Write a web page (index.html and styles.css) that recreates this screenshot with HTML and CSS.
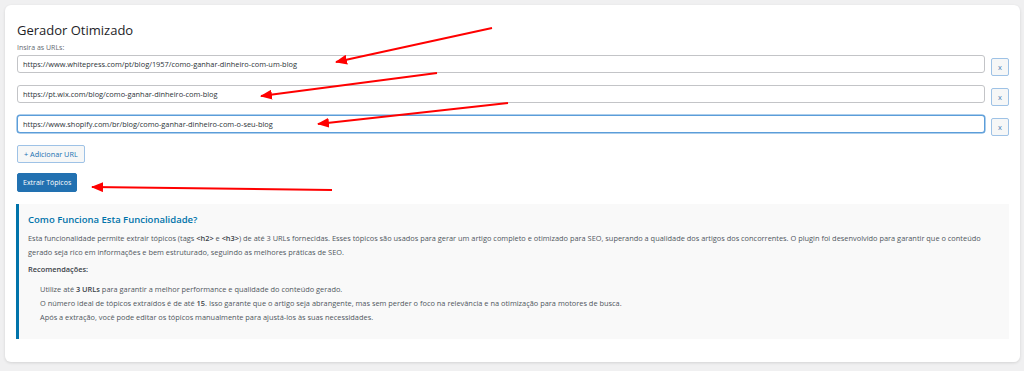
FILE: index.html
```html
<!DOCTYPE html>
<html>
<head>
  <meta charset="utf-8" />
  <title>Gerador Otimizado</title>
<link rel="stylesheet" href="styles.css">
</head>
<body>
<div class="wrap">
  <div class="card">
    <h2 class="title">Gerador Otimizado</h2>
    <label class="field_label">Insira as URLs:</label>
    <div class="url_list">
      <div class="url_row">
        <input class="url_input" type="text" value="https://www.whitepress.com/pt/blog/1957/como-ganhar-dinheiro-com-um-blog">
        <button class="btn_remove">x</button>
      </div>
      <div class="url_row">
        <input class="url_input" type="text" value="https://pt.wix.com/blog/como-ganhar-dinheiro-com-blog">
        <button class="btn_remove">x</button>
      </div>
      <div class="url_row">
        <input class="url_input focused" type="text" value="https://www.shopify.com/br/blog/como-ganhar-dinheiro-com-o-seu-blog">
        <button class="btn_remove">x</button>
      </div>
    </div>
    <button class="btn_add">+ Adicionar URL</button>
    <button class="btn_primary">Extrair Tópicos</button>
    <div class="info_box">
      <h3>Como Funciona Esta Funcionalidade?</h3>
      <p>Esta funcionalidade permite extrair tópicos (tags <strong>&lt;h2&gt;</strong> e <strong>&lt;h3&gt;</strong>) de até 3 URLs fornecidas. Esses tópicos são usados para gerar um artigo completo e otimizado para SEO, superando a qualidade dos artigos dos concorrentes. O plugin foi desenvolvido para garantir que o conteúdo gerado seja rico em informações e bem estruturado, seguindo as melhores práticas de SEO.</p>
      <p class="rec"><strong>Recomendações:</strong></p>
      <ul>
        <li>Utilize até <strong>3 URLs</strong> para garantir a melhor performance e qualidade do conteúdo gerado.</li>
        <li>O número ideal de tópicos extraídos é de até <strong>15</strong>. Isso garante que o artigo seja abrangente, mas sem perder o foco na relevância e na otimização para motores de busca.</li>
        <li>Após a extração, você pode editar os tópicos manualmente para ajustá-los às suas necessidades.</li>
      </ul>
    </div>
  </div>
  <!-- annotation arrows drawn over the screenshot -->
  <svg class="arrows" width="1024" height="371" viewBox="0 0 1024 371">
    <defs>
      <marker id="head" markerWidth="6" markerHeight="5" refX="5.5" refY="2.5" orient="auto" markerUnits="strokeWidth">
        <path d="M0 0 L6 2.5 L0 5 Z" fill="#f00"/>
      </marker>
    </defs>
    <line x1="492" y1="28" x2="336" y2="62" stroke="#f00" stroke-width="2" marker-end="url(#head)"/>
    <line x1="437" y1="73" x2="261" y2="96" stroke="#f00" stroke-width="2" marker-end="url(#head)"/>
    <line x1="508" y1="103" x2="318" y2="124" stroke="#f00" stroke-width="2" marker-end="url(#head)"/>
    <line x1="332" y1="190" x2="92" y2="187" stroke="#f00" stroke-width="2" marker-end="url(#head)"/>
  </svg>
</div>
</body>
</html>
```

FILE: styles.css
```css
* {
  margin: 0;
  padding: 0;
  box-sizing: border-box;
  font-family: "Open Sans", sans-serif;
}
body {
  background-color: #f0f0f1;
  color: #3c434a;
}
div.wrap {
  position: relative;
  padding: 5px 4px 9px 5px;
}
div.card {
  background: #fff;
  border-radius: 6px;
  box-shadow: 0 1px 3px rgba(0, 0, 0, 0.12);
  padding: 17px 11px 23px 12px;
}
h2.title {
  font-size: 13px;
  font-weight: 400;
  color: #1d2327;
  line-height: 16px;
}
label.field_label {
  display: block;
  font-size: 7px;
  color: #646970;
  line-height: 10px;
  margin-top: 5px;
}
div.url_list {
  display: flex;
  flex-direction: column;
  gap: 9px;
  margin-top: 2px;
}
div.url_row {
  display: flex;
  gap: 6px;
}
input.url_input {
  flex: 1;
  height: 18px;
  border: 1px solid #c3c4c7;
  border-radius: 3px;
  padding: 0 5px;
  font-size: 7.4px;
  color: #2c3338;
  background: #fff;
  outline: none;
}
input.url_input.focused {
  border-color: #5b9dd9;
  box-shadow: 0 0 0 0.5px #5b9dd9;
}
button.btn_remove {
  width: 18px;
  height: 18px;
  margin-top: 3px;
  border: 1px solid #9ec2e6;
  border-radius: 2px;
  background: #f6f7f7;
  color: #4f7fb3;
  font-size: 7.5px;
  line-height: 14px;
}
button.btn_add {
  display: block;
  margin-top: 9px;
  height: 18px;
  padding: 0 6px;
  border: 1px solid #9ec2e6;
  border-radius: 2px;
  background: #f6f7f7;
  color: #2271b1;
  font-size: 7.3px;
}
button.btn_primary {
  display: block;
  margin-top: 10px;
  height: 19px;
  padding: 0 5px;
  border: 1px solid #2271b1;
  border-radius: 2px;
  background: #2271b1;
  color: #fff;
  font-size: 7px;
}
div.info_box {
  margin-top: 12px;
  width: 993px;
  margin-left: -1px;
  background: #f9f9f9;
  border-left: 3px solid #0073aa;
  padding: 9px 12px 15px 9px;
}
div.info_box h3 {
  font-size: 9.5px;
  font-weight: 600;
  color: #0073aa;
  line-height: 14px;
  margin-bottom: 4px;
}
div.info_box p {
  font-size: 7.4px;
  line-height: 14px;
  color: #50575e;
}
div.info_box p.rec {
  margin-top: 3px;
  margin-bottom: 6px;
}
div.info_box strong {
  font-weight: 600;
  color: #3c434a;
}
div.info_box ul {
  list-style: none;
  padding-left: 12px;
}
div.info_box li {
  font-size: 7.4px;
  line-height: 14px;
  color: #50575e;
}
svg.arrows {
  position: absolute;
  left: 0;
  top: 0;
  pointer-events: none;
}
```
